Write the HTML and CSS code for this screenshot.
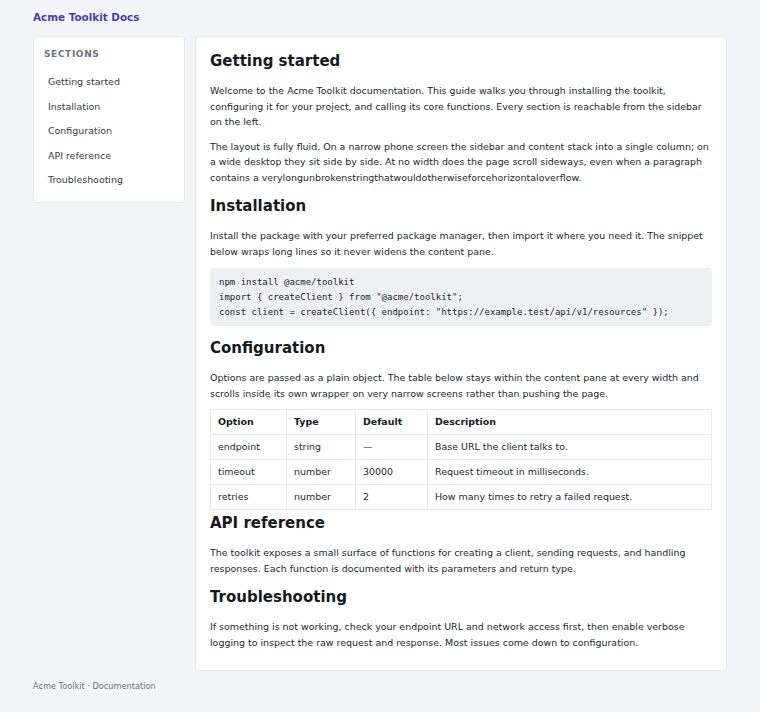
FILE: index.html
```html
<!DOCTYPE html>
<html lang="en">
<head>
    <meta charset="UTF-8">
    <meta name="viewport" content="width=device-width, initial-scale=1.0">
    <title>Acme Toolkit Docs</title>
    <link rel="stylesheet" href="styles.css">
</head>
<body>
    <div class="page">
        <header class="topbar">
            <a href="#" class="brand">Acme Toolkit Docs</a>
        </header>

        <div class="layout">
            <nav class="sidebar">
                <div class="sidebar-title">Sections</div>
                <a href="#getting-started">Getting started</a>
                <a href="#installation">Installation</a>
                <a href="#configuration">Configuration</a>
                <a href="#api-reference">API reference</a>
                <a href="#troubleshooting">Troubleshooting</a>
            </nav>

            <main class="content">
                <h2 id="getting-started">Getting started</h2>
                <p>Welcome to the Acme Toolkit documentation. This guide walks you through installing the toolkit, configuring it for your project, and calling its core functions. Every section is reachable from the sidebar on the left.</p>
                <p>The layout is fully fluid. On a narrow phone screen the sidebar and content stack into a single column; on a wide desktop they sit side by side. At no width does the page scroll sideways, even when a paragraph contains a verylongunbrokenstringthatwouldotherwiseforcehorizontaloverflow.</p>

                <h2 id="installation">Installation</h2>
                <p>Install the package with your preferred package manager, then import it where you need it. The snippet below wraps long lines so it never widens the content pane.</p>
                <pre class="code">npm install @acme/toolkit
import { createClient } from "@acme/toolkit";
const client = createClient({ endpoint: "https://example.test/api/v1/resources" });</pre>

                <h2 id="configuration">Configuration</h2>
                <p>Options are passed as a plain object. The table below stays within the content pane at every width and scrolls inside its own wrapper on very narrow screens rather than pushing the page.</p>
                <div class="table-wrap">
                    <table>
                        <thead>
                            <tr>
                                <th class="col-option">Option</th>
                                <th class="col-type">Type</th>
                                <th class="col-default">Default</th>
                                <th>Description</th>
                            </tr>
                        </thead>
                        <tbody>
                            <tr>
                                <td>endpoint</td>
                                <td>string</td>
                                <td>—</td>
                                <td>Base URL the client talks to.</td>
                            </tr>
                            <tr>
                                <td>timeout</td>
                                <td>number</td>
                                <td>30000</td>
                                <td>Request timeout in milliseconds.</td>
                            </tr>
                            <tr>
                                <td>retries</td>
                                <td>number</td>
                                <td>2</td>
                                <td>How many times to retry a failed request.</td>
                            </tr>
                        </tbody>
                    </table>
                </div>

                <h2 id="api-reference">API reference</h2>
                <p>The toolkit exposes a small surface of functions for creating a client, sending requests, and handling responses. Each function is documented with its parameters and return type.</p>

                <h2 id="troubleshooting">Troubleshooting</h2>
                <p>If something is not working, check your endpoint URL and network access first, then enable verbose logging to inspect the raw request and response. Most issues come down to configuration.</p>
            </main>
        </div>

        <footer class="footer">Acme Toolkit · Documentation</footer>
    </div>
</body>
</html>
```

FILE: styles.css
```css
body {
    margin: 0;
    font-family: 'DejaVu Sans', sans-serif;
    font-size: 9.45px;
    color: #23272e;
    background-color: #f4f5f8;
}
.page {
    padding: 10px 33px 18px;
}
.topbar {
    height: 14px;
    padding-bottom: 12px;
}
.brand {
    font-size: 10.4px;
    font-weight: bold;
    line-height: 14px;
    color: #4b3ab6;
    text-decoration: none;
}
.layout {
    display: grid;
    grid-template-columns: 152px 1fr;
    gap: 10px;
    align-items: start;
}
.sidebar, .content {
    background: white;
    border: 1px solid #e7e9ee;
    border-radius: 4px;
}
.sidebar {
    display: flex;
    flex-direction: column;
    padding: 10px 10px 9px;
}
.sidebar-title {
    font-size: 9px;
    font-weight: bold;
    line-height: 14px;
    letter-spacing: 0.07em;
    text-transform: uppercase;
    color: #6b7280;
    margin-bottom: 9px;
}
.sidebar a {
    padding: 5px 4px;
    line-height: 14.6px;
    color: #363c46;
    text-decoration: none;
}
.content {
    padding: 15px 14px 11px;
    min-width: 0;
}
h2 {
    font-size: 15px;
    line-height: 19px;
    color: #16191e;
    margin: 12px 0 12px;
}
h2:first-child {
    margin-top: 0;
}
p {
    margin: 0 0 9px;
    line-height: 15.5px;
    overflow-wrap: anywhere;
}
.code {
    margin: 0 0 13px;
    padding: 7px 9px;
    background: #eef0f4;
    border-radius: 4px;
    font-family: 'DejaVu Sans Mono', monospace;
    font-size: 9px;
    line-height: 14.75px;
    color: #23272e;
    white-space: pre-wrap;
    overflow-wrap: anywhere;
}
.table-wrap {
    margin-top: -1px;
    overflow-x: auto;
}
.table-wrap + h2 {
    margin-top: 4px;
}
table {
    width: 100%;
    border-collapse: collapse;
}
th, td {
    border: 1px solid #e7e9ee;
    padding: 5px 7px;
    line-height: 14px;
    text-align: left;
}
th {
    color: #16191e;
}
.col-option {
    width: 61px;
}
.col-type {
    width: 54px;
}
.col-default {
    width: 57px;
}
.footer {
    padding-top: 9px;
    font-size: 8.2px;
    line-height: 12px;
    color: #6b7280;
}
```
